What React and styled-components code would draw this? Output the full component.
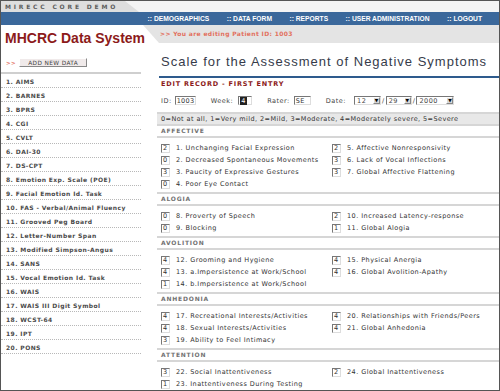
import React from 'react';
import styled, { createGlobalStyle } from 'styled-components';

const GlobalStyle = createGlobalStyle`
  html, body {
    margin: 0;
    padding: 0;
    background: #fff;
  }
  body {
    font-family: "DejaVu Sans", Verdana, sans-serif;
    color: #333;
  }
`

const Frame = styled.div`
  width: 500px;
  height: 391px;
  box-sizing: border-box;
  border: 1px solid #555;
  overflow: hidden;
  display: flex;
  flex-direction: column;
  background: #fff;
`

const TopStrip = styled.div`
  height: 11px;
  display: flex;
  background: #f4f4f4;
  flex-shrink: 0;
`

const Tab = styled.div`
  width: 134px;
  padding-left: 4px;
  background: #dedede;
  clip-path: polygon(0 0, calc(100% - 14px) 0, 100% 100%, 0 100%);
  font-size: 6px;
  font-weight: bold;
  letter-spacing: 2.8px;
  line-height: 11px;
  color: #5c5c5c;
  white-space: nowrap;
`

const NavBar = styled.nav`
  height: 13px;
  flex-shrink: 0;
  background: #3b689b;
  display: flex;
  justify-content: flex-end;
  align-items: center;
  gap: 17.5px;
  padding-right: 17px;
`

const NavItem = styled.span`
  font-family: "Liberation Sans", Arial, sans-serif;
  font-weight: bold;
  font-size: 6.7px;
  color: #fff;
`

const HeaderRow = styled.div`
  display: flex;
  align-items: flex-start;
  flex-shrink: 0;
  height: 21px;
`

const Logo = styled.h1`
  margin: 4px 0 0;
  width: 142px;
  padding-left: 4px;
  box-sizing: border-box;
  font-family: "Liberation Sans", Arial, sans-serif;
  font-size: 14px;
  line-height: 18px;
  font-weight: bold;
  color: #8c1a1a;
  white-space: nowrap;
`

const EditingBand = styled.div`
  flex: 1;
  height: 18px;
  padding-left: 17px;
  background: #e4e4e4;
  clip-path: polygon(0 0, 100% 0, 100% 100%, 16px 100%);
  font-size: 6px;
  font-weight: bold;
  letter-spacing: 0.35px;
  line-height: 18px;
  color: #e2705e;
`

const Body = styled.div`
  display: flex;
  flex: 1;
`

const Sidebar = styled.aside`
  width: 140px;
  flex-shrink: 0;
`

const ButtonRow = styled.div`
  display: flex;
  align-items: center;
  gap: 3px;
  height: 9px;
  margin: 12px 0 5px 5px;
  font-size: 5.5px;
  color: #e2705e;
  font-weight: bold;
  letter-spacing: 0.5px;
`

const AddButton = styled.span`
  display: inline-flex;
  align-items: center;
  justify-content: center;
  width: 68px;
  height: 9px;
  box-sizing: border-box;
  background: #f0eaea;
  border: 1px solid;
  border-color: #fff #888 #888 #fff;
  font-size: 5.8px;
  font-weight: normal;
  color: #444;
  letter-spacing: 0.4px;
`

const NavList = styled.ol`
  list-style: none;
  margin: 0;
  padding: 0;
  border-top: 2px solid #cfcfcf;
`

const NavListItem = styled.li`
  padding: 2px 0 0 5px;
  line-height: 11px;
  border-bottom: 1px dotted #b8b8b8;
  font-size: 6px;
  font-weight: bold;
  letter-spacing: 0.4px;
  color: #4a4a4a;
  white-space: nowrap;
`

const Main = styled.main`
  flex: 1;
  margin-left: 16px;
  display: flex;
  flex-direction: column;
`

const Title = styled.h2`
  margin: 0 0 0 2px;
  padding: 8px 0 6px 2px;
  font-family: "Liberation Sans", Arial, sans-serif;
  font-weight: normal;
  font-size: 13px;
  line-height: 16px;
  letter-spacing: 1px;
  color: #363b4a;
  border-bottom: 2px solid #2e5b8d;
`

const EditHead = styled.div`
  margin-top: 1px;
  padding-left: 4px;
  font-size: 6.5px;
  line-height: 10px;
  font-weight: bold;
  letter-spacing: 0.8px;
  color: #8c1a1a;
`

const FormRow = styled.div`
  display: flex;
  align-items: center;
  gap: 15px;
  height: 11px;
  margin-top: 6px;
  padding-left: 4px;
  font-size: 6.5px;
  letter-spacing: 0.5px;
  color: #444;
`

const Field = styled.label`
  display: flex;
  align-items: center;
  gap: ${p => p.gap || 3}px;
`

const TextBox = styled.span`
  display: inline-flex;
  align-items: center;
  width: ${p => p.w}px;
  height: 9px;
  box-sizing: border-box;
  padding-left: 1px;
  background: #fff;
  border: 1px solid;
  border-color: #777 #ddd #ddd #777;
  font-size: 6.5px;
  letter-spacing: 0.3px;
  color: #333;
`

const Selected = styled.span`
  background: #222;
  color: #fff;
  padding: 0 1px;
`

const DateGroup = styled.span`
  display: flex;
  align-items: center;
  gap: 1px;
`

const SelectBox = styled.span`
  display: inline-flex;
  align-items: center;
  justify-content: space-between;
  width: ${p => p.w}px;
  height: 9px;
  box-sizing: border-box;
  padding-left: 2px;
  background: #fff;
  border: 1px solid;
  border-color: #777 #ddd #ddd #777;
  font-size: 6.5px;
`

const Arrow = styled.span`
  width: 7px;
  height: 7px;
  background: #d8d8d8;
  border: 1px solid;
  border-color: #fff #888 #888 #fff;
  box-sizing: border-box;
  display: flex;
  align-items: center;
  justify-content: center;
  font-size: 4.5px;
  letter-spacing: 0;
  color: #000;
`

const Legend = styled.div`
  margin-top: 6px;
  height: 10px;
  line-height: 10px;
  padding: 0 0 0 4px;
  border-top: 2px solid #d6d6d6;
  background: #e8e8e8;
  font-size: 6.5px;
  letter-spacing: 0.42px;
  color: #333;
  white-space: nowrap;
`

const SectionHead = styled.div`
  height: 10px;
  line-height: 10px;
  padding-left: 4px;
  border-top: 2px solid #d6d6d6;
  border-bottom: 2px solid #d6d6d6;
  font-size: 6px;
  font-weight: bold;
  letter-spacing: 0.8px;
  color: #727272;
`

const SectionBody = styled.div`
  display: grid;
  grid-template-columns: 171px 1fr;
  padding: 4px 0 2px 4px;
`

const Column = styled.div`
  display: flex;
  flex-direction: column;
`

const Item = styled.div`
  display: flex;
  align-items: center;
  gap: 6px;
  height: 12px;
  font-size: 6.5px;
  letter-spacing: 0.45px;
  color: #333;
  white-space: nowrap;
`

const ScoreBox = styled.span`
  width: 9px;
  height: 9px;
  box-sizing: border-box;
  padding-left: 1px;
  display: inline-flex;
  align-items: center;
  background: #fff;
  border: 1px solid;
  border-color: #777 #ddd #ddd #777;
  font-size: 6.5px;
  letter-spacing: 0;
`

const scales = [
  'AIMS', 'BARNES', 'BPRS', 'CGI', 'CVLT', 'DAI-30', 'DS-CPT',
  'Emotion Exp. Scale (POE)', 'Facial Emotion Id. Task',
  'FAS - Verbal/Animal Fluency', 'Grooved Peg Board', 'Letter-Number Span',
  'Modified Simpson-Angus', 'SANS', 'Vocal Emotion Id. Task', 'WAIS',
  'WAIS III Digit Symbol', 'WCST-64', 'IPT', 'PONS',
]

const sections = [
  {
    name: 'AFFECTIVE',
    left: [['2', '1. Unchanging Facial Expression'], ['0', '2. Decreased Spontaneous Movements'], ['3', '3. Paucity of Expressive Gestures'], ['0', '4. Poor Eye Contact']],
    right: [['2', '5. Affective Nonresponsivity'], ['3', '6. Lack of Vocal Inflections'], ['3', '7. Global Affective Flattening']],
  },
  {
    name: 'ALOGIA',
    left: [['0', '8. Proverty of Speech'], ['0', '9. Blocking']],
    right: [['2', '10. Increased Latency-response'], ['1', '11. Global Alogia']],
  },
  {
    name: 'AVOLITION',
    left: [['4', '12. Grooming and Hygiene'], ['4', '13. a.Impersistence at Work/School'], ['1', '14. b.Impersistence at Work/School']],
    right: [['4', '15. Physical Anergia'], ['4', '16. Global Avolition-Apathy']],
  },
  {
    name: 'ANHEDONIA',
    left: [['4', '17. Recreational Interests/Activities'], ['4', '18. Sexual Interests/Activities'], ['3', '19. Ability to Feel Intimacy']],
    right: [['4', '20. Relationships with Friends/Peers'], ['4', '21. Global Anhedonia']],
  },
  {
    name: 'ATTENTION',
    left: [['3', '22. Social Inattentiveness'], ['1', '23. Inattentiveness During Testing']],
    right: [['2', '24. Global Inattentiveness']],
  },
]

const Select = ({ value, w }) => (
  <SelectBox w={w}>{value}<Arrow>▼</Arrow></SelectBox>
)

const App = () => {
  return (
    <Frame>
      <GlobalStyle />
      <TopStrip>
        <Tab>MIRECC CORE DEMO</Tab>
      </TopStrip>
      <NavBar>
        <NavItem>:: DEMOGRAPHICS</NavItem>
        <NavItem>:: DATA FORM</NavItem>
        <NavItem>:: REPORTS</NavItem>
        <NavItem>:: USER ADMINISTRATION</NavItem>
        <NavItem>:: LOGOUT</NavItem>
      </NavBar>
      <HeaderRow>
        <Logo>MHCRC Data System</Logo>
        <EditingBand>&gt;&gt; You are editing Patient ID: 1003</EditingBand>
      </HeaderRow>
      <Body>
        <Sidebar>
          <ButtonRow>
            &gt;&gt;
            <AddButton>ADD NEW DATA</AddButton>
          </ButtonRow>
          <NavList>
            {scales.map((s, i) => (
              <NavListItem key={s}>{i + 1}. {s}</NavListItem>
            ))}
          </NavList>
        </Sidebar>
        <Main>
          <Title>Scale for the Assessment of Negative Symptoms</Title>
          <EditHead>EDIT RECORD - FIRST ENTRY</EditHead>
          <FormRow>
            <Field>ID: <TextBox w={21}>1003</TextBox></Field>
            <Field gap={5}>Week: <TextBox w={14}><Selected>4</Selected></TextBox></Field>
            <Field gap={4}>Rater: <TextBox w={17}>SE</TextBox></Field>
            <Field gap={8}>
              Date:
              <DateGroup>
                <Select value="12" w={27} />/
                <Select value="29" w={26} />/
                <Select value="2000" w={38} />
              </DateGroup>
            </Field>
          </FormRow>
          <Legend>0=Not at all, 1=Very mild, 2=Mild, 3=Moderate, 4=Moderately severe, 5=Severe</Legend>
          {sections.map(sec => (
            <section key={sec.name}>
              <SectionHead>{sec.name}</SectionHead>
              <SectionBody>
                <Column>
                  {sec.left.map(([v, t]) => (
                    <Item key={t}><ScoreBox>{v}</ScoreBox>{t}</Item>
                  ))}
                </Column>
                <Column>
                  {sec.right.map(([v, t]) => (
                    <Item key={t}><ScoreBox>{v}</ScoreBox>{t}</Item>
                  ))}
                </Column>
              </SectionBody>
            </section>
          ))}
        </Main>
      </Body>
    </Frame>
  )
}

export default App
